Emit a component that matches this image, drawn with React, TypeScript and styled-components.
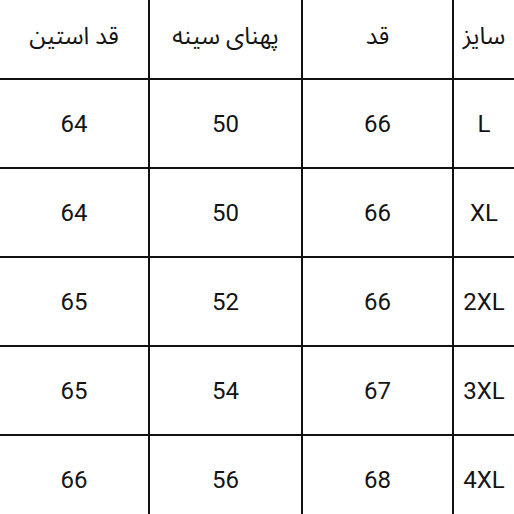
import React from "react";
import styled, { createGlobalStyle } from "styled-components";

const GlobalStyle = createGlobalStyle`
  html, body {
    margin: 0;
    padding: 0;
    background: #ffffff;
    overflow: hidden;
  }
`;

const Grid = styled.div`
  direction: rtl;
  display: grid;
  grid-template-columns: 60px 149px 151px 148px;
  grid-template-rows: 78px repeat(5, 87px);
  gap: 2px;
  width: 514px;
  height: 514px;
  background: #111111;
  overflow: hidden;
  font-family: Roboto, "Noto Sans Arabic", "DejaVu Sans", sans-serif;
`;

interface CellProps {
  $head?: boolean;
}

const Cell = styled.div<CellProps>`
  background: #ffffff;
  display: flex;
  align-items: center;
  justify-content: center;
  color: #141414;
  font-size: 24px;
  padding-bottom: ${(p) => (p.$head ? "6px" : "0")};
  box-sizing: border-box;
  white-space: nowrap;
`;

const headers = ["سایز", "قد", "پهنای سینه", "قد استین"];

const rows = [
  ["L", "66", "50", "64"],
  ["XL", "66", "50", "64"],
  ["2XL", "66", "52", "65"],
  ["3XL", "67", "54", "65"],
  ["4XL", "68", "56", "66"],
];

const App = () => {
  return (
    <>
      <GlobalStyle />
      <Grid>
        {headers.map((h) => (
          <Cell key={h} $head>
            {h}
          </Cell>
        ))}
        {rows.map((r) =>
          r.map((v, i) => (
            <Cell key={r[0] + i} dir="ltr">
              {v}
            </Cell>
          ))
        )}
      </Grid>
    </>
  );
};

export default App;
